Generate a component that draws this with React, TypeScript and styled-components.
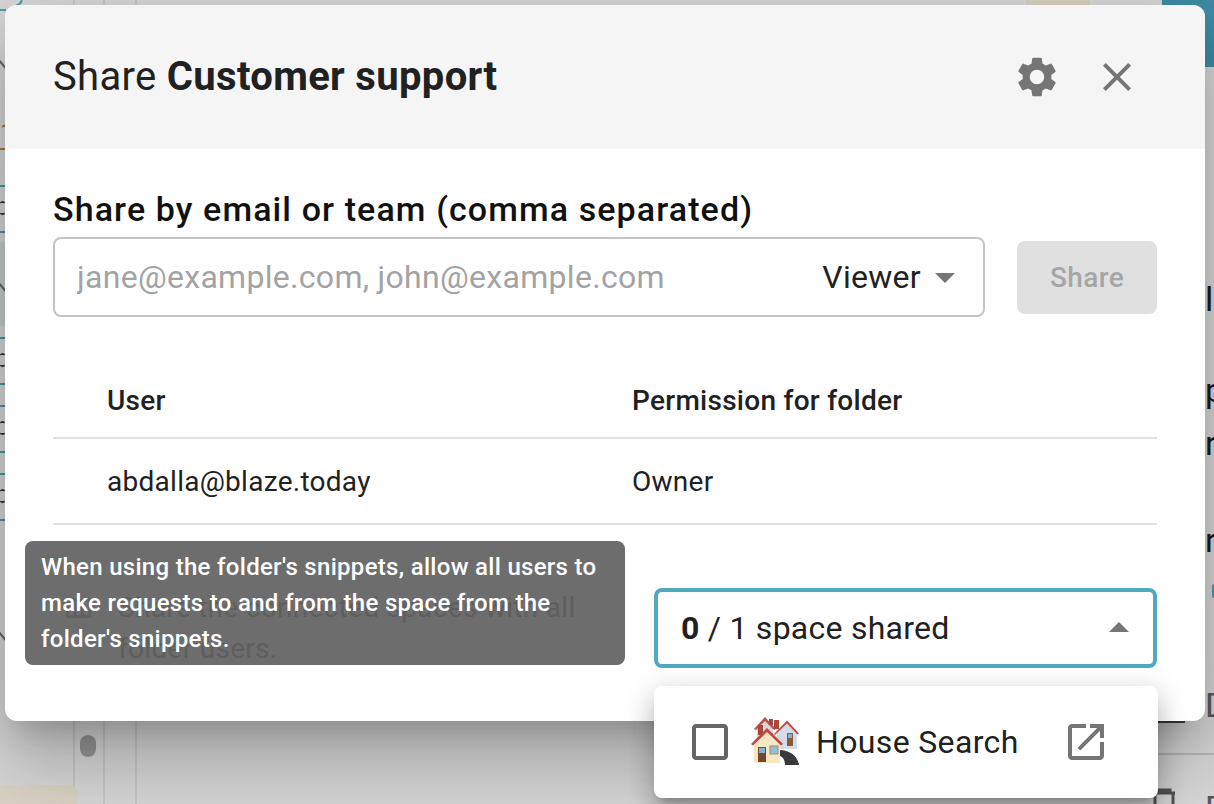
import React from 'react';
import styled, { createGlobalStyle } from 'styled-components';

const GlobalStyle = createGlobalStyle`
  html, body {
    margin: 0;
    padding: 0;
    width: 1214px;
    height: 804px;
    overflow: hidden;
    background: #dadada;
    font-family: Roboto, "Liberation Sans", sans-serif;
    color: #212121;
  }
  * { box-sizing: border-box; }
`;

const Page = styled.div`
  position: relative;
  width: 1214px;
  height: 804px;
  padding: 5px 9px 0 5px;
  overflow: hidden;
`;

/* the dimmed app that shows around the dialog */
const VLine = styled.div<{ $x: number }>`
  position: absolute;
  top: 0;
  bottom: 0;
  left: ${p => p.$x}px;
  width: 2px;
  background: #c9c9c9;
`;

const Tick = styled.div<{ $y: number }>`
  position: absolute;
  left: 0;
  top: ${p => p.$y}px;
  width: 6px;
  height: 2px;
  background: #4b95a8;
`;

const Squiggle = styled.div<{ $y: number }>`
  position: absolute;
  left: 0;
  top: ${p => p.$y}px;
  width: 5px;
  height: 14px;
  border-top: 2px solid #333;
  border-bottom: 2px solid #333;
  border-radius: 3px;
`;

const LeftHighlight = styled.div`
  position: absolute;
  left: 0;
  top: 242px;
  width: 6px;
  height: 84px;
  background: #c8d0d0;
`;

const ChevronStroke = styled.div<{ $y: number }>`
  position: absolute;
  left: -3px;
  top: ${p => p.$y}px;
  width: 12px;
  height: 2px;
  background: #666;
  transform: rotate(50deg);
`;

const BrownRule = styled.div`
  position: absolute;
  left: 0;
  top: 116px;
  width: 6px;
  height: 34px;
  border-bottom: 2px solid #a8773f;
  color: #a8773f;
  font-size: 26px;
  line-height: 34px;
  overflow: hidden;
`;

const TealCorner = styled.div`
  position: absolute;
  right: 0;
  top: 0;
  width: 52px;
  height: 67px;
  background: #3f8ea5;
`;

const CornerMark = styled.svg`
  position: absolute;
  left: 0;
  top: 0;
  width: 24px;
  height: 14px;
  fill: none;
  stroke: #4b9fb3;
  stroke-width: 2;
`;

const TealDot = styled.div`
  position: absolute;
  left: 1212px;
  top: 584px;
  width: 4px;
  height: 14px;
  border-radius: 2px;
  background: #4b9fb3;
`;

const BeigeTop = styled.div`
  position: absolute;
  left: 1026px;
  top: 0;
  width: 64px;
  height: 6px;
  background: #d9d4c0;
`;

const BeigeCard = styled.div`
  position: absolute;
  left: 0;
  top: 785px;
  width: 78px;
  height: 30px;
  border-radius: 0 8px 0 0;
  background: #ddd6c8;
`;

const ScrollPill = styled.div`
  position: absolute;
  left: 80px;
  top: 735px;
  width: 16px;
  height: 22px;
  border-radius: 8px;
  background: #999;
`;

const StrayText = styled.span<{ $y: number; $muted?: boolean }>`
  position: absolute;
  left: 1205px;
  top: ${p => p.$y}px;
  width: 9px;
  overflow: hidden;
  font-size: 34px;
  line-height: 40px;
  color: ${p => (p.$muted ? '#5a5a5a' : '#1c1c1c')};
`;

const RightRule = styled.div`
  position: absolute;
  left: 1158px;
  right: 0;
  top: 753px;
  height: 2px;
  background: #bdbdbd;
`;

const DarkStub = styled.div`
  position: absolute;
  left: 1157px;
  top: 720px;
  width: 28px;
  height: 3px;
  background: #444;
`;

const TrashMark = styled.svg`
  position: absolute;
  left: 1150px;
  top: 787px;
  width: 28px;
  height: 28px;
  fill: none;
  stroke: #555;
  stroke-width: 3;
`;

const Dialog = styled.div`
  position: relative;
  width: 1200px;
  height: 716px;
  border-radius: 12px;
  background: #fff;
  box-shadow: 0 22px 30px -14px rgba(0, 0, 0, 0.2), 0 48px 76px 6px rgba(0, 0, 0, 0.14), 0 18px 92px 16px rgba(0, 0, 0, 0.12);
`;

const Header = styled.header`
  display: flex;
  align-items: center;
  height: 144px;
  padding: 0 64px 0 48px;
  border-radius: 12px 12px 0 0;
  background: #f5f5f5;
`;

const Title = styled.h2`
  flex: 1;
  margin: 0;
  font-size: 40px;
  font-weight: 400;
  line-height: 44px;
  letter-spacing: 0.33px;
  color: #212121;

  b { font-weight: 700; }
`;

const HeaderActions = styled.div`
  display: flex;
  align-items: center;
  gap: 32px;
`;

const Icon = styled.svg<{ $size?: number; $color?: string }>`
  flex: none;
  display: block;
  width: ${p => p.$size || 48}px;
  height: ${p => p.$size || 48}px;
  fill: ${p => p.$color || '#757575'};
`;

const Body = styled.div`
  padding: 41px 48px 0;
`;

const FieldLabel = styled.label`
  display: block;
  font-size: 34px;
  font-weight: 500;
  line-height: 38px;
  letter-spacing: 1.1px;
  color: #111;
`;

const ShareRow = styled.div`
  display: flex;
  align-items: center;
  gap: 32px;
  margin-top: 9px;
`;

const InputBox = styled.div`
  flex: 1;
  display: flex;
  align-items: center;
  height: 80px;
  padding: 0 14px 0 22px;
  border: 2px solid #c4c4c4;
  border-radius: 8px;
`;

const EmailInput = styled.input`
  flex: 1;
  min-width: 0;
  border: 0;
  outline: 0;
  padding: 0;
  background: transparent;
  font-family: inherit;
  font-size: 32px;
  letter-spacing: 0.3px;
  color: #212121;

  &::placeholder {
    color: #a3a3a3;
    opacity: 1;
  }
`;

const RoleSelect = styled.div`
  display: flex;
  align-items: center;
  font-size: 32px;
  letter-spacing: 0.3px;
  color: #212121;
`;

const ShareButton = styled.button`
  width: 140px;
  height: 73px;
  border: 0;
  border-radius: 8px;
  background: #e0e0e0;
  font-family: inherit;
  font-size: 28px;
  font-weight: 500;
  letter-spacing: 0.4px;
  color: #a6a6a6;
`;

const UserTable = styled.div`
  margin-top: 46px;
`;

const TableRow = styled.div<{ $head?: boolean }>`
  display: grid;
  grid-template-columns: 525px 1fr;
  align-items: center;
  height: ${p => (p.$head ? 76 : 86)}px;
  padding-left: 54px;
  border-bottom: 2px solid #e0e0e0;
  font-size: 28px;
  font-weight: ${p => (p.$head ? 500 : 400)};
  letter-spacing: 0.27px;
  color: #212121;
`;

const SpacesRow = styled.div`
  display: flex;
  align-items: center;
  margin-top: 62px;
`;

const SpacesText = styled.div`
  display: flex;
  align-items: flex-start;
  gap: 22px;
  width: 601px;
  padding: 0 24px 0 7px;
  font-size: 28px;
  line-height: 41px;
  letter-spacing: 0.3px;
  color: #444;

  svg { margin-top: 4px; }
`;

const SpacesSelect = styled.div`
  position: relative;
  display: flex;
  align-items: center;
  justify-content: space-between;
  width: 503px;
  height: 80px;
  padding: 0 10px 0 23px;
  border: 4px solid #4fa9bf;
  border-radius: 8px;
  font-size: 32px;
  letter-spacing: 0.25px;
  color: #212121;

  b { font-weight: 700; }
`;

const Tooltip = styled.div`
  position: absolute;
  left: 20px;
  top: 536px;
  width: 600px;
  height: 124px;
  padding: 8px 16px;
  border-radius: 8px;
  background: rgba(97, 97, 97, 0.92);
  font-size: 24px;
  font-weight: 500;
  line-height: 36px;
  letter-spacing: 0.3px;
  color: #fff;
`;

const SpacesMenu = styled.div`
  position: absolute;
  left: -4px;
  top: 94px;
  display: flex;
  align-items: center;
  width: 504px;
  height: 112px;
  padding: 0 48px 0 32px;
  border-radius: 8px;
  background: #fff;
  box-shadow: 0 10px 10px -6px rgba(0, 0, 0, 0.2), 0 16px 24px 2px rgba(0, 0, 0, 0.14), 0 6px 30px 4px rgba(0, 0, 0, 0.12);
`;

const HouseIcon = styled.svg`
  flex: none;
  display: block;
  width: 52px;
  height: 52px;
  margin: -2px 15px 0 15px;
`;

const MenuLabel = styled.span`
  flex: 1;
  font-size: 32px;
  letter-spacing: 0.35px;
  color: #212121;
`;

const GEAR = 'M19.14 12.94c.04-.3.06-.61.06-.94 0-.32-.02-.64-.07-.94l2.03-1.58c.18-.14.23-.41.12-.61l-1.92-3.32c-.12-.22-.37-.29-.59-.22l-2.39.96c-.5-.38-1.03-.7-1.62-.94l-.36-2.54c-.04-.24-.24-.41-.48-.41h-3.84c-.24 0-.43.17-.47.41l-.36 2.54c-.59.24-1.13.57-1.62.94l-2.39-.96c-.22-.08-.47 0-.59.22L2.74 8.87c-.12.21-.08.47.12.61l2.03 1.58c-.05.3-.09.63-.09.94s.02.64.07.94l-2.03 1.58c-.18.14-.23.41-.12.61l1.92 3.32c.12.22.37.29.59.22l2.39-.96c.5.38 1.03.7 1.62.94l.36 2.54c.05.24.24.41.48.41h3.84c.24 0 .44-.17.47-.41l.36-2.54c.59-.24 1.13-.56 1.62-.94l2.39.96c.22.08.47 0 .59-.22l1.92-3.32c.12-.22.07-.47-.12-.61l-2.01-1.58zM12 15.6c-1.98 0-3.6-1.62-3.6-3.6s1.62-3.6 3.6-3.6 3.6 1.62 3.6 3.6-1.62 3.6-3.6 3.6z';
const CLOSE = 'M19 6.41 17.59 5 12 10.59 6.41 5 5 6.41 10.59 12 5 17.59 6.41 19 12 13.41 17.59 19 19 17.59 13.41 12z';
const CHECKBOX = 'M19 5v14H5V5h14m0-2H5c-1.1 0-2 .9-2 2v14c0 1.1.9 2 2 2h14c1.1 0 2-.9 2-2V5c0-1.1-.9-2-2-2z';
const OPEN_NEW = 'M19 19H5V5h7V3H5c-1.11 0-2 .9-2 2v14c0 1.1.89 2 2 2h14c1.1 0 2-.9 2-2v-7h-2v7zM14 3v2h3.59l-9.83 9.83 1.41 1.41L19 6.41V10h2V3h-7z';
const COLUMNS = 'M4 5v13h17V5H4zm10 2v9h-3V7h3zM6 7h3v9H6V7zm13 9h-3V7h3v9z';

const TICKS = [185, 231, 337, 383, 405, 451, 473, 519];
const SQUIGGLES = [201, 353, 421, 489];
const CHEVRONS = [64, 287, 636];
const STRAY: [number, string, boolean][] = [
  [279, 'ld', false],
  [370, 'p', false],
  [423, 'r', false],
  [520, 'r', false],
  [685, 'D', true],
  [788, 'D', true],
];

function Houses() {
  return (
    <HouseIcon viewBox="750 714 52 52">
      {/* back house */}
      <path d="M758 727l8-9 8 9v10h-16z" fill="#dcd6d8" />
      <path d="M755 728l11-12 11 12-2 1-9-9-9 9z" fill="#b9534c" />
      <rect x="770" y="718" width="4" height="6" fill="#9c4a3f" />
      {/* right house */}
      <path d="M778 732l10-10 10 10v16h-20z" fill="#d3dce7" />
      <rect x="775" y="719" width="5" height="9" fill="#a8473c" />
      <path d="M775 733l13-13.500 12 13-1.500 1-10.500-11-12 11.500z" fill="#c0473f" />
      <rect x="788" y="732" width="6" height="13" fill="#8a5a3c" />
      <rect x="789" y="733" width="4" height="4" fill="#7fb2d6" />
      {/* road */}
      <path d="M781 749c9 0 18 6 19 15h-14c0-5-2-8-5-9z" fill="#3a3a3c" />
      {/* front house */}
      <rect x="759" y="724" width="5" height="10" fill="#a8473c" />
      <path d="M755 741l13-12 13 12v21h-26z" fill="#f5e7c3" />
      <path d="M752 743l16-16 16 16-2 1.500-14-13.500-14 13.500z" fill="#c0473f" />
      <rect x="759" y="746" width="8" height="15" fill="#75482f" />
      <rect x="760" y="747" width="6" height="5" fill="#7fb2d6" />
      <rect x="771" y="745" width="8" height="8" fill="#8fbfe0" stroke="#a58c63" />
    </HouseIcon>
  );
}

export default function App() {
  return (
    <Page>
      <GlobalStyle />

      <VLine $x={73} />
      <VLine $x={103} />
      <VLine $x={135} />
      <LeftHighlight />
      <BrownRule>1</BrownRule>
      <CornerMark viewBox="0 0 24 14">
        <path d="M0 10h6M22 0c-1 3-3 5-6 6" />
      </CornerMark>
      {TICKS.map(y => <Tick key={y} $y={y} />)}
      {SQUIGGLES.map(y => <Squiggle key={y} $y={y} />)}
      {CHEVRONS.map(y => <ChevronStroke key={y} $y={y} />)}
      <TealCorner />
      <TealDot />
      <BeigeTop />
      <BeigeCard />
      <ScrollPill />
      <RightRule />
      <DarkStub />
      <TrashMark viewBox="0 0 28 28">
        <path d="M3 6h22M8 6V3h12v3M5 6v22M23 6v22" />
      </TrashMark>
      {STRAY.map(([y, t, muted]) => <StrayText key={y} $y={y} $muted={muted}>{t}</StrayText>)}

      <Dialog>
        <Header>
          <Title>Share <b>Customer support</b></Title>
          <HeaderActions>
            <Icon viewBox="0 0 24 24"><path d={GEAR} /></Icon>
            <Icon viewBox="0 0 24 24"><path d={CLOSE} /></Icon>
          </HeaderActions>
        </Header>

        <Body>
          <FieldLabel>Share by email or team (comma separated)</FieldLabel>
          <ShareRow>
            <InputBox>
              <EmailInput placeholder="jane@example.com, john@example.com" />
              <RoleSelect>
                Viewer
                <Icon viewBox="0 0 24 24"><path d="M7 10l5 5 5-5z" /></Icon>
              </RoleSelect>
            </InputBox>
            <ShareButton disabled>Share</ShareButton>
          </ShareRow>

          <UserTable>
            <TableRow $head>
              <span>User</span>
              <span>Permission for folder</span>
            </TableRow>
            <TableRow>
              <span>abdalla@blaze.today</span>
              <span>Owner</span>
            </TableRow>
          </UserTable>

          <SpacesRow>
            <SpacesText>
              <Icon viewBox="0 0 24 24" $size={36} $color="#666"><path d={COLUMNS} /></Icon>
              <span>Share the connected spaces with all folder users.</span>
            </SpacesText>
            <SpacesSelect>
              <span><b>0</b> / 1 space shared</span>
              <Icon viewBox="0 0 24 24"><path d="M7 14l5-5 5 5z" /></Icon>
              <SpacesMenu>
                <Icon viewBox="0 0 24 24" $color="#666"><path d={CHECKBOX} /></Icon>
                <Houses />
                <MenuLabel>House Search</MenuLabel>
                <Icon viewBox="0 0 24 24"><path d={OPEN_NEW} /></Icon>
              </SpacesMenu>
            </SpacesSelect>
          </SpacesRow>
        </Body>

        <Tooltip>When using the folder's snippets, allow all users to make requests to and from the space from the folder's snippets.</Tooltip>
      </Dialog>
    </Page>
  );
}
